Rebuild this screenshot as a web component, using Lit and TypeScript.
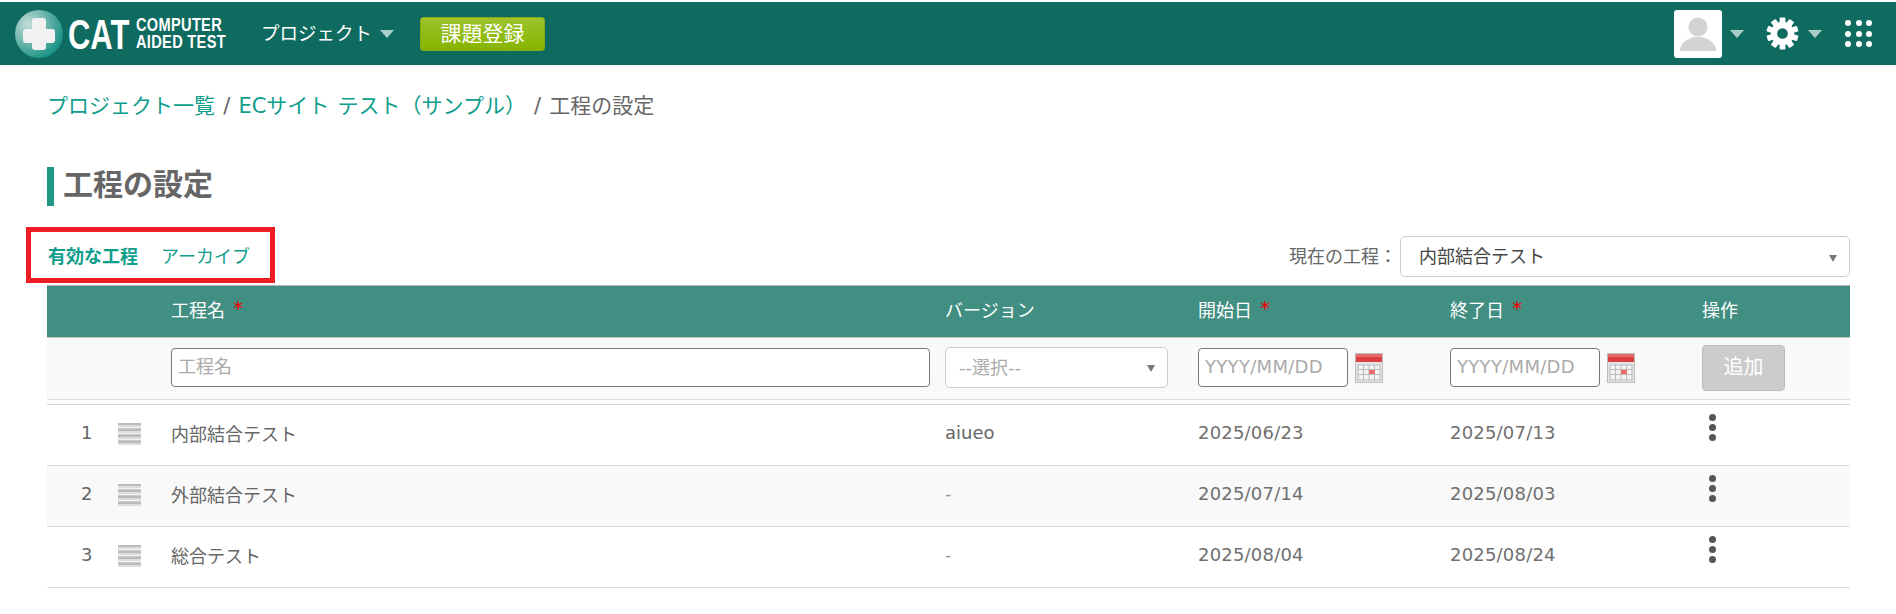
import { LitElement, html, css, svg } from "lit";
import { customElement } from "lit/decorators.js";

const caret = html`<span class="caret"></span>`;
const calendar = html`<svg class="cal" width="28" height="30" viewBox="0 0 28 30">
  <rect x="0.5" y="0.5" width="27" height="29" fill="#e4e4e4" stroke="#bdbdbd"/>
  <rect x="1" y="1" width="26" height="8" fill="#dc3f3f"/>
  <rect x="1" y="1" width="26" height="3" fill="#e96a6a"/>
  <rect x="3" y="12" width="22" height="15" fill="#f3f3f3" stroke="#bbb"/>
  <path d="M3 16.5H25M3 21.5H25M8.500 12V27M14 12V27M19.500 12V27" stroke="#bbb" fill="none"/>
  <rect x="14" y="17" width="6" height="4" fill="#ee6b6b"/>
</svg>`;
const gear = svg`<svg class="gear" width="33" height="33" viewBox="0 0 34 34">
  <g fill="#fff">
    ${[0, 36, 72, 108, 144].map((a) => svg`<rect x="14" y="0.500" width="6" height="33" rx="1" transform="rotate(${a} 17 17)"/>`)}
    <circle cx="17" cy="17" r="12"/>
  </g>
  <circle cx="17" cy="17" r="5.500" fill="#0f6b60"/>
</svg>`;
const rows = [
  { n: 1, name: "内部結合テスト", ver: "aiueo", s: "2025/06/23", e: "2025/07/13" },
  { n: 2, name: "外部結合テスト", ver: "-", s: "2025/07/14", e: "2025/08/03" },
  { n: 3, name: "総合テスト", ver: "-", s: "2025/08/04", e: "2025/08/24" },
];

@customElement("app-root")
export class AppRoot extends LitElement {
  static styles = css`
    :host { display: block; font-family: "DejaVu Sans", "Noto Sans CJK JP", sans-serif; font-size: 18px; color: #666; background: #fff; min-height: 614px; }
    * { box-sizing: border-box; }
    .top { margin-top: 2px; height: 63px; background: #0f6b60; display: flex; align-items: center; color: #fff; }
    .logo { display: flex; align-items: center; margin-left: 15px; width: 246px; height: 48px; }
    .ball { width: 48px; height: 48px; border-radius: 50%; background: radial-gradient(circle at 28% 30%, #c5dcd8 0%, #5fb0a6 45%, #118e80 80%); position: relative; flex: none; }
    .ball::before { content: ""; position: absolute; left: 17px; top: 8px; width: 14px; height: 32px; background: #f1f1f1; border-radius: 3px; }
    .ball::after { content: ""; position: absolute; left: 8px; top: 19px; width: 32px; height: 14px; background: #f1f1f1; border-radius: 3px; }
    .cat { font-family: "Liberation Sans", sans-serif; font-weight: 700; font-size: 43px; line-height: 48px; margin-left: 5px; width: 68px; flex: none; display: block; transform: scaleX(.72); transform-origin: left center; }
    .cap { font-family: "Liberation Sans", sans-serif; font-weight: 700; font-size: 18px; line-height: 17px; width: 89px; flex: none; display: block; transform: scaleX(.81); transform-origin: left center; white-space: nowrap; letter-spacing: .4px; }
    .nav { display: flex; align-items: center; font-size: 18.500px; padding-bottom: 3px; }
    .caret { display: inline-block; width: 0; height: 0; border-left: 7px solid transparent; border-right: 7px solid transparent; border-top: 8px solid #a9cdc7; }
    .nav .caret { margin-left: 8px; margin-top: 3px; }
    .reg { margin-left: 26px; width: 125px; height: 34px; border-radius: 3px; background: linear-gradient(#9cc32b, #87b400); border: 1px solid #86a91a; color: #fff; font-size: 21px; padding-bottom: 3px; display: flex; align-items: center; justify-content: center; }
    .spacer { flex: 1; }
    .avatar { width: 48px; height: 48px; background: #fff; border-radius: 3px; display: block; }
    .top-right { display: flex; align-items: center; margin-right: 24px; }
    .top-right .caret { margin-left: 8px; }
    .gear { margin-left: 22px; display: block; }
    .gear + .caret { margin-left: 9px; }
    .dots { margin-left: 23px; display: grid; grid-template-columns: repeat(3, 6px); gap: 4.500px; }
    .dots i { width: 6px; height: 6px; background: #fff; border-radius: 50%; display: block; }
    main { padding: 0 46px 0 47px; }
    .crumb { padding-top: 26px; font-size: 21px; line-height: 30px; height: 55px; white-space: nowrap; word-spacing: 1.500px; }
    .crumb a { color: #0f9d8c; }
    .title { margin-top: 47px; height: 39px; border-left: 7px solid #1f9784; padding-left: 9px; font-size: 30px; font-weight: 700; line-height: 36px; color: #666; }
    .bar { display: flex; align-items: center; justify-content: space-between; height: 79px; position: relative; }
    .tabs { display: flex; gap: 23px; margin-left: 1px; margin-top: 18px; }
    .tabs b { color: #0f9d8c; font-weight: 700; }
    .tabs span { color: #0f9d8c; }
    .mark { position: absolute; left: -21px; top: 21px; width: 249px; height: 56px; border: 5px solid #ee1c25; }
    .cur { display: flex; align-items: center; margin-top: 22px; }
    .sel { height: 41px; border: 1px solid #ccc; border-radius: 5px; background: #fff; display: flex; align-items: center; justify-content: space-between; padding: 0 12px 3px 18px; }
    .sel::after { content: ""; border-left: 4.500px solid transparent; border-right: 4.500px solid transparent; border-top: 7px solid #777; margin-top: 6px; }
    .cur .sel { width: 450px; margin-left: 3px; color: #444; }
    .cur > span { padding-bottom: 3px; }
    .row { display: grid; grid-template-columns: 124px 774px 253px 252px 252px 1fr; align-items: center; }
    .head { height: 53px; background: #418e82; border-top: 1px solid #b4b4b4; border-bottom: 1px solid #c4c4c4; color: #fff; padding-bottom: 5px; }
    .head i { color: #e00; font-style: normal; font-size: 20px; margin-left: 8px; position: relative; top: -2px; }
    .add { height: 62px; background: #f9f9f9; border-bottom: 1px solid #ddd; padding-bottom: 2px; }
    .sep { height: 5px; border-bottom: 1px solid #d4d4d4; }
    input { height: 39px; border: 1px solid #777; border-radius: 4px; padding: 0 6px 2px; font: inherit; background: #fff; color: #666; outline: none; }
    input::placeholder { color: #aaa; }
    .date input { letter-spacing: .3px; }
    .name-in { width: 759px; }
    .add .sel { width: 223px; color: #aaa; padding: 0 12px 4px 13px; }
    .date { display: flex; align-items: center; gap: 7px; }
    .date input { width: 150px; }
    .cal { display: block; }
    .btn { width: 83px; height: 46px; background: #ccc; border: 1px solid #bbb; border-radius: 4px; color: #fff; font-size: 20px; padding-bottom: 4px; display: flex; align-items: center; justify-content: center; }
    .item { height: 61px; border-bottom: 1px solid #ddd; padding-bottom: 5px; }
    .item.alt { background: #f9f9f9; }
    .num { display: flex; align-items: center; }
    .num span { width: 41px; padding-left: 34px; }
    .drag { margin-left: 30px; margin-top: 3px; width: 23px; height: 22px; background: repeating-linear-gradient(#bbb 0 2px, #ddd 2px 4px, #f3f3f3 4px 5px, #ccc 5px 6px); }
    .dash { color: #999; }
    .date-v { letter-spacing: .2px; color: #707070; }
    .kebab { display: flex; flex-direction: column; gap: 3px; width: 7px; margin-left: 7px; margin-top: -10px; }
    .kebab i { width: 7px; height: 7px; border-radius: 50%; background: #555; display: block; }
  `;

  render() {
    return html`
      <header class="top">
        <div class="logo">
          <div class="ball"></div>
          <span class="cat">CAT</span>
          <span class="cap">COMPUTER<br />AIDED TEST</span>
        </div>
        <div class="nav">プロジェクト${caret}</div>
        <div class="reg">課題登録</div>
        <div class="spacer"></div>
        <div class="top-right">
          <svg class="avatar" viewBox="0 0 48 48">
            <circle cx="24" cy="17" r="9.500" fill="#d2d3d5"/>
            <path d="M6 41c0-9 8-12 14-14h8c6 2 14 5 14 14z" fill="#d2d3d5"/>
          </svg>
          ${caret}
          ${gear}
          ${caret}
          <div class="dots">${Array.from({ length: 9 }, () => html`<i></i>`)}</div>
        </div>
      </header>
      <main>
        <div class="crumb"><a>プロジェクト一覧</a> / <a>ECサイト テスト（サンプル）</a> / 工程の設定</div>
        <div class="title">工程の設定</div>
        <div class="bar">
          <div class="tabs"><b>有効な工程</b><span>アーカイブ</span></div>
          <div class="mark"></div>
          <div class="cur"><span>現在の工程：</span><div class="sel">内部結合テスト</div></div>
        </div>
        <div class="row head">
          <div></div>
          <div>工程名<i>*</i></div>
          <div>バージョン</div>
          <div>開始日<i>*</i></div>
          <div>終了日<i>*</i></div>
          <div>操作</div>
        </div>
        <div class="row add">
          <div></div>
          <div><input class="name-in" placeholder="工程名" /></div>
          <div class="sel">--選択--</div>
          <div class="date"><input placeholder="YYYY/MM/DD" />${calendar}</div>
          <div class="date"><input placeholder="YYYY/MM/DD" />${calendar}</div>
          <div class="btn">追加</div>
        </div>
        <div class="sep"></div>
        ${rows.map(
          (r) => html`<div class="row item ${r.n === 2 ? "alt" : ""}">
            <div class="num"><span>${r.n}</span><div class="drag"></div></div>
            <div>${r.name}</div>
            <div class="${r.ver === "-" ? "dash" : ""}">${r.ver}</div>
            <div class="date-v">${r.s}</div>
            <div class="date-v">${r.e}</div>
            <div class="kebab"><i></i><i></i><i></i></div>
          </div>`
        )}
      </main>
    `;
  }
}
